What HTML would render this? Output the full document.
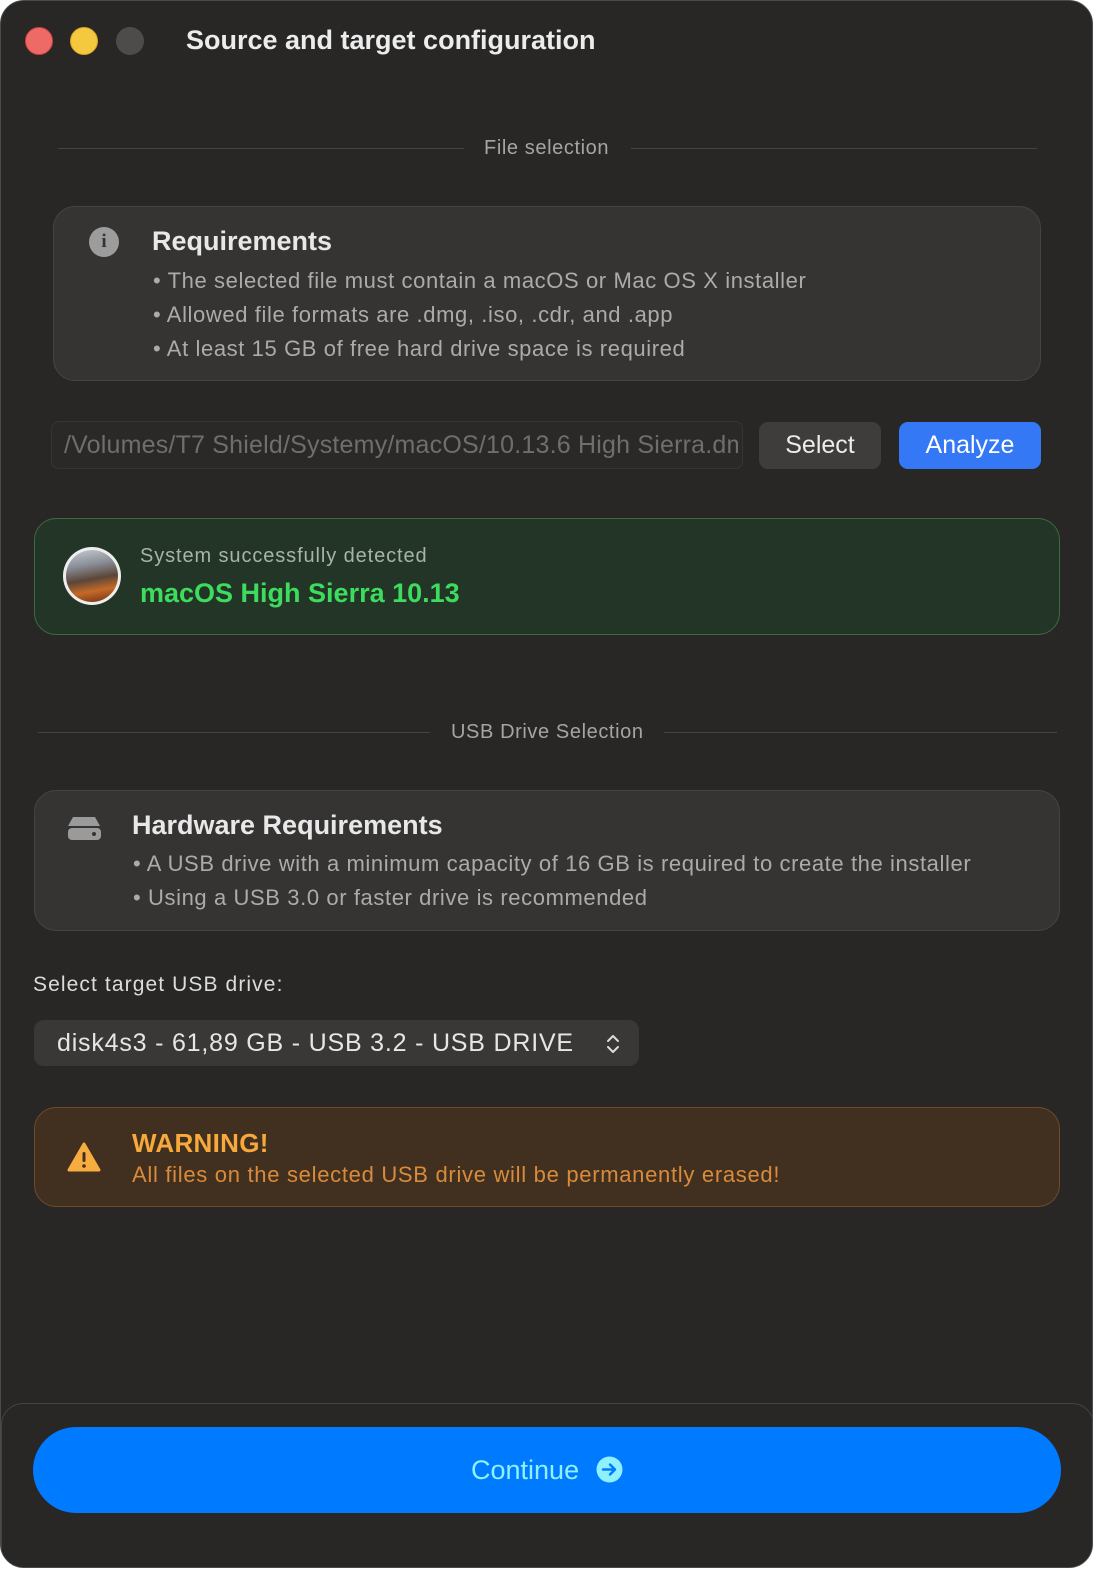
<!DOCTYPE html>
<html><head><meta charset="utf-8"><style>
*{margin:0;padding:0;box-sizing:border-box}
html,body{width:1100px;height:1580px;overflow:hidden}
body{background:#fff;font-family:"Liberation Sans",sans-serif;position:relative}
.win{position:absolute;left:0;top:0;width:1093px;height:1568px;background:#282726;border-radius:24px;border:1px solid #4a4a4a;overflow:hidden}
.a{position:absolute;white-space:nowrap}
.dot{position:absolute;width:28px;height:28px;border-radius:50%;top:26px}
.line{position:absolute;height:1px;background:#444}
.box{position:absolute;border-radius:22px}
.b{color:#ababab;font-size:22px;letter-spacing:0.6px}
</style></head><body><div class="win">
<div class="dot" style="left:24px;background:#ee6a67;border:1px solid #d0413e"></div>
<div class="dot" style="left:69px;background:#f4c83f;border:1px solid #d9a523"></div>
<div class="dot" style="left:115px;background:#4d4c4b"></div>
<div class="a" style="left:185px;top:24px;font-size:27px;font-weight:bold;color:#ececec">Source and target configuration</div>

<div class="line" style="left:57px;width:406px;top:147px"></div>
<div class="line" style="left:630px;width:406px;top:147px"></div>
<div class="a" style="left:483px;top:136px;font-size:20px;color:#a5a5a5;letter-spacing:0.6px">File selection</div>

<div class="box" style="left:52px;top:205px;width:988px;height:175px;background:#353433;border:1px solid #444"></div>
<div class="a" style="left:88px;top:226px;width:30px;height:30px;border-radius:50%;background:#9c9c9c;color:#353433;font:bold 19px 'Liberation Serif',serif;text-align:center;line-height:30px">i</div>
<div class="a" style="left:151px;top:225px;font-size:27px;font-weight:bold;color:#e8e8e8">Requirements</div>
<div class="a b" style="left:152px;top:267px">• The selected file must contain a macOS or Mac OS X installer</div>
<div class="a b" style="left:152px;top:301px">• Allowed file formats are .dmg, .iso, .cdr, and .app</div>
<div class="a b" style="left:152px;top:335px">• At least 15 GB of free hard drive space is required</div>

<div class="a" style="left:50px;top:420px;width:692px;height:48px;border:1px solid #363535;border-radius:8px;background:#2a2928"></div>
<div class="a" style="left:63px;top:430px;width:674px;overflow:hidden;font-size:25px;color:#6f6e6d;letter-spacing:0.2px">/Volumes/T7 Shield/Systemy/macOS/10.13.6 High Sierra.dmg</div>
<div class="a" style="left:758px;top:421px;width:122px;height:47px;border-radius:9px;background:#3e3d3c;color:#ececec;font-size:25px;text-align:center;line-height:47px">Select</div>
<div class="a" style="left:898px;top:421px;width:142px;height:47px;border-radius:9px;background:#3478f6;color:#fff;font-size:25px;text-align:center;line-height:47px">Analyze</div>

<div class="box" style="left:33px;top:517px;width:1026px;height:117px;background:#233526;border:1px solid #3d6b40"></div>
<div class="a" style="left:62px;top:546px;width:58px;height:58px;border-radius:50%;background:#eee;padding:3px"><div style="width:52px;height:52px;border-radius:50%;background:linear-gradient(170deg,#c8ccd2 0%,#8a8f98 30%,#5b4638 55%,#c46a28 75%,#6b2f14 100%)"></div></div>
<div class="a" style="left:139px;top:544px;font-size:20px;color:#a8b4a9;letter-spacing:0.9px">System successfully detected</div>
<div class="a" style="left:139px;top:577px;font-size:27px;font-weight:bold;color:#3ddc5f">macOS High Sierra 10.13</div>

<div class="line" style="left:37px;width:392px;top:731px"></div>
<div class="line" style="left:663px;width:393px;top:731px"></div>
<div class="a" style="left:450px;top:720px;font-size:20px;color:#a5a5a5;letter-spacing:0.6px">USB Drive Selection</div>

<div class="box" style="left:33px;top:789px;width:1026px;height:141px;background:#353433;border:1px solid #444"></div>
<svg class="a" style="left:66px;top:814px" width="36" height="26" viewBox="0 0 36 26"><path d="M6 2h22l5 9H1z" fill="#9a9a9a"/><rect x="1" y="13" width="33" height="12" rx="4" fill="#9a9a9a"/><circle cx="27" cy="19" r="2" fill="#353433"/></svg>
<div class="a" style="left:131px;top:809px;font-size:27px;font-weight:bold;color:#e8e8e8">Hardware Requirements</div>
<div class="a b" style="left:132px;top:850px">• A USB drive with a minimum capacity of 16 GB is required to create the installer</div>
<div class="a b" style="left:132px;top:884px">• Using a USB 3.0 or faster drive is recommended</div>

<div class="a" style="left:32px;top:972px;font-size:21px;color:#dcdcdc;letter-spacing:1.1px">Select target USB drive:</div>
<div class="a" style="left:33px;top:1019px;width:605px;height:46px;border-radius:10px;background:#393837"></div>
<div class="a" style="left:56px;top:1028px;font-size:25px;color:#e6e6e6;letter-spacing:0.8px">disk4s3 - 61,89 GB - USB 3.2 - USB DRIVE</div>
<svg class="a" style="left:603px;top:1032px" width="18" height="22" viewBox="0 0 18 22"><path d="M4 8l5-5 5 5M4 14l5 5 5-5" fill="none" stroke="#ddd" stroke-width="2" stroke-linecap="round" stroke-linejoin="round"/></svg>

<div class="box" style="left:33px;top:1106px;width:1026px;height:100px;background:#41301f;border:1px solid #6f4b2a"></div>
<svg class="a" style="left:66px;top:1141px" width="34" height="30" viewBox="0 0 34 30"><path d="M17 2L32 28H2z" fill="#f7ac40" stroke="#f7ac40" stroke-width="3" stroke-linejoin="round"/><rect x="15.5" y="10" width="3" height="10" rx="1.5" fill="#41301f"/><circle cx="17" cy="24" r="1.8" fill="#41301f"/></svg>
<div class="a" style="left:131px;top:1127px;font-size:26px;font-weight:bold;color:#f7a93b;letter-spacing:0.3px">WARNING!</div>
<div class="a" style="left:131px;top:1161px;font-size:22px;color:#d98b3b;letter-spacing:0.7px">All files on the selected USB drive will be permanently erased!</div>

<div class="a" style="left:0;top:1402px;width:1093px;height:180px;border:1px solid #444;border-radius:22px;background:#282726"></div>
<div class="a" style="left:32px;top:1426px;width:1028px;height:86px;border-radius:43px;background:#007aff"></div>
<div class="a" style="left:470px;top:1454px;font-size:27px;color:#8ff1ff">Continue</div>
<svg class="a" style="left:595px;top:1455px" width="27" height="27" viewBox="0 0 27 27"><circle cx="13.5" cy="13.5" r="13" fill="#8ff1ff"/><path d="M7 13.5h12M14 8.5l5 5-5 5" fill="none" stroke="#007aff" stroke-width="2.4" stroke-linecap="round" stroke-linejoin="round"/></svg>
</div></body></html>
